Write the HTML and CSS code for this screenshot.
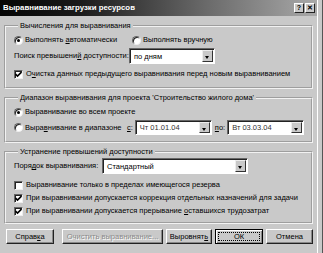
FILE: index.html
```html
<!DOCTYPE html>
<html>
    <head>
        <meta charset="utf-8">
        <title>Выравнивание загрузки ресурсов</title>
        <link rel="stylesheet" href="styles.css">
    </head>
    <body>
        <div class="dialog">
            <div class="titlebar">
                <span class="title">Выравнивание загрузки ресурсов</span>
                <span class="tbtn">?</span>
                <span class="tbtn">&#x2715;</span>
            </div>
            <div class="content">
                <fieldset class="group g1">
                    <legend>Вычисления для выравнивания</legend>
                    <div class="row">
                        <label class="opt auto"><span class="radio on"></span><span>Выполнять <u>а</u>втоматически</span></label>
                        <label class="opt"><span class="radio"></span><span>Выполнять вручную</span></label>
                    </div>
                    <div class="row search">
                        <span class="cap">Поиск превышени<u>й</u> доступности:</span>
                        <div class="combo"><span class="val">по дням</span><span class="drop"></span></div>
                    </div>
                    <label class="opt"><span class="check on"><svg viewBox="0 0 7 7" width="7" height="7"><path d="M0.5 3 L2.5 5 L6.5 1" fill="none" stroke="#000" stroke-width="1.6"/></svg></span><span>О<u>ч</u>истка данных предыдущего выравнивания перед новым выравниванием</span></label>
                </fieldset>

                <fieldset class="group g2">
                    <legend>Диапазон выравнивания для проекта 'Строительство жилого дома'</legend>
                    <label class="opt"><span class="radio on"></span><span>Выравнивание во всем проекте</span></label>
                    <div class="row range">
                        <label class="opt"><span class="radio"></span><span>Выра<u>в</u>нивание в диапазоне</span></label>
                        <span class="cap"><u>с</u>:</span>
                        <div class="combo"><span class="val">Чт 01.01.04</span><span class="drop"></span></div>
                        <span class="cap to"><u>п</u>о:</span>
                        <div class="combo"><span class="val">Вт 03.03.04</span><span class="drop"></span></div>
                    </div>
                </fieldset>

                <fieldset class="group g3">
                    <legend>Устранение превышений доступности</legend>
                    <div class="row order">
                        <span class="cap">Поря<u>д</u>ок выравнивания:</span>
                        <div class="combo"><span class="val">Стандартный</span><span class="drop"></span></div>
                    </div>
                    <label class="opt"><span class="check"></span><span>Выравнивание только в пределах имеющегося резерва</span></label>
                    <label class="opt"><span class="check on"><svg viewBox="0 0 7 7" width="7" height="7"><path d="M0.5 3 L2.5 5 L6.5 1" fill="none" stroke="#000" stroke-width="1.6"/></svg></span><span>При выравнивании допускается коррекция отдельных назначений для задачи</span></label>
                    <label class="opt"><span class="check on"><svg viewBox="0 0 7 7" width="7" height="7"><path d="M0.5 3 L2.5 5 L6.5 1" fill="none" stroke="#000" stroke-width="1.6"/></svg></span><span>При выравнивании допускается прерывание <u>о</u>ставшихся трудозатрат</span></label>
                </fieldset>

                <div class="buttons">
                    <button class="btn help">Справ<u>к</u>а</button>
                    <button class="btn clear" disabled>Очистить выравнивание...</button>
                    <button class="btn level">Выровнят<u>ь</u></button>
                    <button class="btn ok"><span class="focus">ОК</span></button>
                    <button class="btn cancel">Отмена</button>
                </div>
            </div>
        </div>
    </body>
</html>
```

FILE: styles.css
```css
* {
    box-sizing: border-box;
}
body {
    margin: 0;
    background: #c9c9c9;
    font-family: "Liberation Sans", Arial, sans-serif;
    font-size: 7.5px;
    line-height: 10px;
    color: #000;
}
.dialog {
    width: 323px;
    height: 253px;
    background: #c9c9c9;
    border-right: 1px solid #555;
    box-shadow: inset -4px 0 0 #c9c9c9, inset -5px 0 0 #fff;
}
.titlebar {
    display: flex;
    align-items: center;
    height: 16px;
    margin-right: 5px;
    padding: 0 2px 0 3px;
    background: linear-gradient(to right, #050505 0%, #1a1a1a 25%, #6a6a6a 65%, #a9a9a9 100%);
}
.title {
    flex: 1;
    color: #fff;
    font-size: 7.8px;
    font-weight: bold;
}
.tbtn {
    width: 10px;
    height: 10px;
    margin-left: 1px;
    background: #c9c9c9;
    border: 1px solid;
    border-color: #fff #222 #222 #fff;
    font-size: 7px;
    line-height: 8px;
    font-weight: bold;
    text-align: center;
}
.content {
    padding: 5px 9px 0 4px;
}
.group {
    margin: 0 0 4px 0;
    padding: 4px 3px 8px 8px;
    border: 2px groove #f2f2f2;
    display: flex;
    flex-direction: column;
    min-width: 0;
}
.group legend {
    margin-left: 4px;
    padding: 0 2px;
    line-height: 10px;
}
.row {
    display: flex;
    align-items: center;
}
.row > * {
    flex: none;
}
.cap {
    white-space: nowrap;
}
.opt {
    display: flex;
    align-items: center;
    height: 10px;
    white-space: nowrap;
}
.opt > * {
    flex: none;
}
.opt.auto {
    width: 118px;
}
.radio {
    position: relative;
    width: 9px;
    height: 9px;
    margin-right: 2px;
    border-radius: 50%;
    background: #fff;
    border: 1px solid;
    border-color: #666 #eee #eee #666;
    box-shadow: inset 1px 1px 0 #222;
}
.radio.on::after {
    content: "";
    position: absolute;
    left: 2px;
    top: 2px;
    width: 3px;
    height: 3px;
    border-radius: 50%;
    background: #000;
}
.check {
    display: flex;
    align-items: center;
    justify-content: center;
    width: 9px;
    height: 9px;
    margin-right: 3px;
    background: #fff;
    border: 1px solid;
    border-color: #666 #eee #eee #666;
    box-shadow: inset 1px 1px 0 #222;
}
.combo {
    display: flex;
    height: 16px;
    background: #fff;
    border: 1px solid;
    border-color: #666 #fff #fff #666;
    box-shadow: inset 1px 1px 0 #222;
    padding: 1px;
}
.combo .val {
    flex: 1;
    padding: 2px 0 0 3px;
    white-space: nowrap;
}
.drop {
    position: relative;
    flex: none;
    width: 11px;
    background: #c9c9c9;
    border: 1px solid;
    border-color: #eee #333 #333 #eee;
}
.drop::after {
    content: "";
    position: absolute;
    left: 2px;
    top: 5px;
    border: 2.5px solid transparent;
    border-top: 3px solid #000;
    border-bottom: 0;
}
.g1 .search {
    margin: 3px 0 5px;
}
.g1 .search .cap {
    width: 115px;
}
.g1 .search .combo {
    width: 86px;
}
.g2 {
    gap: 3px;
    padding-bottom: 6px;
}
.g2 .range {
    height: 15px;
}
.g2 .range .opt {
    width: 113px;
}
.g2 .range .combo {
    width: 77px;
    height: 15px;
    margin-left: 2px;
}
.g2 .range .to {
    margin-left: 3px;
}
.g2 .range .combo .val {
    padding-top: 1px;
    color: #333;
}
.g3 {
    padding-top: 1px;
    padding-bottom: 6px;
    gap: 3px;
}
.g3 .order {
    margin-bottom: 3px;
}
.g3 .order .cap {
    width: 88px;
}
.g3 .order .combo {
    width: 146px;
}
.buttons {
    display: flex;
    gap: 3px;
    margin-top: 5px;
    padding-left: 2px;
}
.btn {
    flex: none;
    min-width: 0;
    height: 15px;
    padding: 0;
    overflow: hidden;
    white-space: nowrap;
    font: inherit;
    color: #000;
    background: #c9c9c9;
    border: 1px solid;
    border-color: #fff #222 #222 #fff;
    box-shadow: inset -1px -1px 0 #888;
}
.help {
    width: 48px;
    margin-right: 5px;
}
.clear {
    width: 101px;
    color: #8a8a8a;
    text-shadow: 1px 1px 0 #fff;
}
.level {
    width: 46px;
}
.ok {
    width: 48px;
    border: 1px solid #000;
    box-shadow: inset 1px 1px 0 #fff, inset -1px -1px 0 #888;
    padding: 2px;
}
.ok .focus {
    display: block;
    height: 9px;
    line-height: 8px;
    border: 1px dotted #000;
}
.cancel {
    width: 47px;
}
```
